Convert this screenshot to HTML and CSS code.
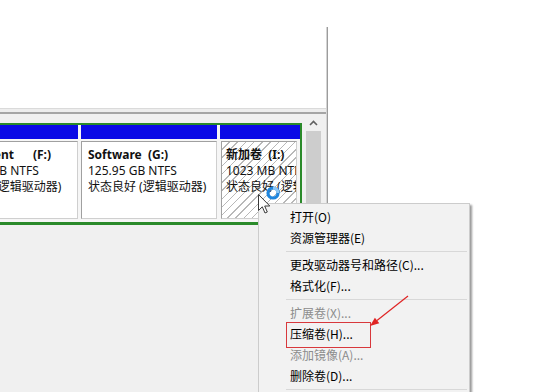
FILE: index.html
```html
<!DOCTYPE html>
<html lang="zh-CN">
<head>
<meta charset="utf-8">
<title>磁盘管理</title>
<link rel="stylesheet" href="styles.css">
</head>
<body>
<div class="screen">
  <div class="window">
    <div class="list-pane"></div>
    <div class="splitter"></div>
    <div class="graph-pane">
      <div class="disks">
        <div class="extended">
          <div class="part p1">
            <div class="hdr"></div>
            <div class="body">
              <div class="name shifted">Entertainment<span class="drv">(F:)</span></div>
              <div>1000.00 GB NTFS</div>
              <div>状态良好 (逻辑驱动器)</div>
            </div>
          </div>
          <div class="part p2">
            <div class="hdr"></div>
            <div class="body">
              <div class="name">Software&nbsp;&nbsp;(G:)</div>
              <div>125.95 GB NTFS</div>
              <div>状态良好 (逻辑驱动器)</div>
            </div>
          </div>
          <div class="part p3">
            <div class="hdr"></div>
            <div class="body">
              <div class="name">新加卷&nbsp;&nbsp;(I:)</div>
              <div>1023 MB NTFS</div>
              <div>状态良好 (逻辑驱动器)</div>
            </div>
          </div>
        </div>
      </div>
      <div class="vscroll">
        <div class="vs-btn">
          <svg width="9" height="6" viewBox="0 0 9 6"><path d="M1 5 L4.5 1.5 L8 5" fill="none" stroke="#606060" stroke-width="1.6"/></svg>
        </div>
        <div class="vs-thumb"></div>
      </div>
    </div>
  </div>
  <div class="edge"></div>

  <div class="menu">
    <div class="mi">打开(O)</div>
    <div class="mi">资源管理器(E)</div>
    <div class="sep"></div>
    <div class="mi">更改驱动器号和路径(C)...</div>
    <div class="mi">格式化(F)...</div>
    <div class="sep"></div>
    <div class="mi disabled">扩展卷(X)...</div>
    <div class="mi"><span class="mark">压缩卷(H)...</span></div>
    <div class="mi disabled">添加镜像(A)...</div>
    <div class="mi">删除卷(D)...</div>
    <div class="sep"></div>
  </div>

  <svg class="arrow" width="55" height="42" viewBox="0 0 55 42">
    <line x1="48" y1="6" x2="17" y2="30.5" stroke="#e02424" stroke-width="1.2"/>
    <path d="M10 36 L19.3 33.2 L14.9 27.7 Z" fill="#e02424"/>
  </svg>

  <svg class="busy" width="16" height="16" viewBox="0 0 16 16">
    <circle cx="8" cy="8" r="5" fill="none" stroke="#1f86de" stroke-width="3.2"/>
    <path d="M8 3 A5 5 0 0 1 13 8" fill="none" stroke="#8cc6f5" stroke-width="3.2"/>
  </svg>
  <svg class="cursor" width="13" height="20" viewBox="0 0 13 20">
    <path d="M0.5 0.5 V16.5 L4.3 12.8 L7 19 L9.3 18 L6.7 12 H11.8 Z" fill="#fff" stroke="#3a3a3a" stroke-width="1" stroke-linejoin="round"/>
  </svg>
</div>
</body>
</html>
```

FILE: styles.css
```css
* {
  box-sizing: border-box;
  margin: 0;
  padding: 0;
}

html,
body {
  width: 552px;
  height: 392px;
  overflow: hidden;
  background: #fff;
}

body {
  font-family: "Noto Sans", "Noto Sans CJK SC", sans-serif;
  font-size: 12px;
  color: #000;
}

.screen {
  position: relative;
  display: flex;
  width: 552px;
  height: 392px;
  overflow: hidden;
}

.window {
  flex: none;
  width: 326px;
  height: 392px;
  display: flex;
  flex-direction: column;
}

.list-pane {
  height: 109px;
  background: #fff;
  border-bottom: 1px solid #dadada;
}

.splitter {
  height: 5px;
  background: #ededed;
  border-bottom: 2px solid #a5a5a5;
}

.graph-pane {
  flex: 1;
  min-height: 0;
  display: flex;
  background: #f0f0f0;
  padding-right: 4px;
}

.disks {
  flex: 1;
  min-width: 0;
  padding-top: 9px;
}

.extended {
  display: flex;
  gap: 3px;
  width: 368px;
  height: 102px;
  margin-left: -66px;
  border: 2px solid #2a8a2a;
  border-bottom-width: 3px;
  padding-bottom: 3px;
  background: #f6f6f6;
}

.part {
  display: flex;
  flex-direction: column;
  gap: 2px;
  flex: none;
}

.p1 { width: 142px; }
.p2 { width: 136px; }
.p3 { width: 80px; }

.hdr {
  height: 14px;
  background: #0a0ae6;
}

.body {
  flex: 1;
  background: #fff;
  border: 1px solid #cfcfcf;
  border-top-color: #a0a0a0;
  border-left-color: #a0a0a0;
  padding: 5px 0 0 6px;
  line-height: 16px;
  white-space: nowrap;
  overflow: hidden;
  color: #111;
}

.name {
  font-weight: bold;
}

.name.shifted {
  margin-left: -17px;
}

.drv {
  margin-left: 19px;
}

.p3 .body {
  margin: 0 3px 0 1px;
  padding-left: 4px;
  background: repeating-linear-gradient(135deg, #fff 0 4.8px, #b8b8b8 4.8px 5.8px);
}

.vscroll {
  flex: none;
  width: 17px;
  margin-left: 3px;
  display: flex;
  flex-direction: column;
  background: #f0f0f0;
}

.vs-btn {
  height: 17px;
  display: flex;
  align-items: center;
  justify-content: center;
}

.vs-thumb {
  flex: 1;
  margin: 0 1px;
  background: #cdcdcd;
}

.edge {
  flex: none;
  width: 2px;
  margin-top: 27px;
  background: #9c9c9c;
  border-left: 1px solid #d4d4d4;
}

.menu {
  position: absolute;
  left: 258px;
  top: 203px;
  width: 212px;
  height: 200px;
  background: #f2f2f2;
  border: 1px solid #cccccc;
  box-shadow: 2px 2px 2px rgba(0, 0, 0, 0.4);
  padding: 2px 2px 0;
  font-family: "Noto Sans CJK SC", sans-serif;
}

.mi {
  height: 21px;
  line-height: 21px;
  padding-left: 29px;
  white-space: nowrap;
}

.mi.disabled {
  color: #8c8c8c;
}

.sep {
  height: 6px;
  margin-left: 25px;
  background: linear-gradient(#d8d8d8, #d8d8d8) 0 3px / 100% 1px no-repeat;
}

.mark {
  position: relative;
  display: inline-block;
}

.mark::after {
  content: "";
  position: absolute;
  left: -4px;
  top: -1px;
  width: 83px;
  height: 24px;
  border: 1.5px solid #d8383c;
}

.arrow {
  position: absolute;
  left: 360px;
  top: 290px;
}

.busy {
  position: absolute;
  left: 265px;
  top: 185px;
}

.cursor {
  position: absolute;
  left: 258px;
  top: 194px;
}
```
